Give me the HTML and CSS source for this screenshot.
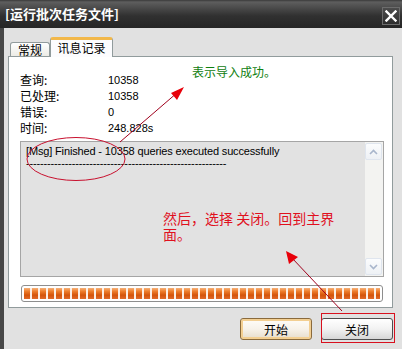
FILE: index.html
```html
<!DOCTYPE html>
<html>
<head>
<meta charset="utf-8">
<link rel="stylesheet" href="styles.css">
</head>
<body>
<div class="window">
  <div class="titlebar">
    <span class="title">[运行批次任务文件]</span>
    <span class="close"><svg width="12" height="12" viewBox="0 0 12 12"><path d="M1.5 1.5 L10.5 10.5 M10.5 1.5 L1.5 10.5" stroke="#fff" stroke-width="2.4" stroke-linecap="square"/></svg></span>
  </div>
  <div class="content">
    <div class="tabs">
      <div class="tab">常规</div>
      <div class="tab active">讯息记录</div>
    </div>
    <div class="panel">
      <div class="stats">
        <span class="label">查询:</span><span class="value">10358</span>
        <span class="label">已处理:</span><span class="value">10358</span>
        <span class="label">错误:</span><span class="value">0</span>
        <span class="label">时间:</span><span class="value">248.828s</span>
      </div>
      <div class="log">
        <div class="log-text">
          <div>[Msg] Finished - 10358 queries executed successfully</div>
          <div>---------------------------------------------------------</div>
        </div>
        <div class="scrollbar">
          <div class="sb-btn"><svg width="9" height="6" viewBox="0 0 9 6"><path d="M1 5 L4.5 1.5 L8 5" fill="none" stroke="#a9b6cc" stroke-width="1.6"/></svg></div>
          <div class="sb-track"></div>
          <div class="sb-btn"><svg width="9" height="6" viewBox="0 0 9 6"><path d="M1 1 L4.5 4.5 L8 1" fill="none" stroke="#a9b6cc" stroke-width="1.6"/></svg></div>
        </div>
      </div>
      <div class="progress"><div class="progress-fill"></div></div>
    </div>
    <div class="buttons">
      <button class="btn default">开始</button>
      <button class="btn">关闭</button>
    </div>
  </div>
  <div class="note-green">表示导入成功。</div>
  <div class="note-red"><div>然后，选择 关闭。回到主界</div><div>面。</div></div>
  <svg class="annot" width="402" height="349" viewBox="0 0 402 349">
    <ellipse cx="76" cy="159" rx="49" ry="21.5" fill="none" stroke="#c8102e" stroke-width="1"/>
    <line x1="120" y1="142" x2="178" y2="92" stroke="#a0001c" stroke-width="1"/>
    <polygon points="184,87 171,93 177,100" fill="#e8000a"/>
    <line x1="342" y1="311" x2="292" y2="258" stroke="#a0001c" stroke-width="1"/>
    <polygon points="286,251 289,264 298,257" fill="#e8000a"/>
  </svg>
  <div class="highlight"></div>
</div>
</body>
</html>
```

FILE: styles.css
```css
* { box-sizing: border-box; }
html, body { margin: 0; padding: 0; }
body {
  font-family: "Liberation Sans", "Noto Sans CJK SC", sans-serif;
  font-size: 11px;
  color: #000;
  background: #e1e1e1;
}
.window {
  position: relative;
  width: 402px;
  height: 349px;
  background: #e1e1e1;
  overflow: hidden;
}
.titlebar {
  height: 28px;
  display: flex;
  align-items: flex-start;
  justify-content: space-between;
  padding: 0 2px 0 5px;
  background: linear-gradient(#3a3a3a 0, #5e5e5e 2px, #4a4a4a 8px, #303030 16px, #262626 100%);
}
.title {
  color: #fff;
  font-weight: bold;
  font-size: 13px;
  line-height: 28px;
  font-family: "Noto Sans CJK SC", sans-serif;
}
.close {
  margin-top: 7px;
  width: 18px;
  height: 18px;
  border: 1px solid #6c6c6c;
  background: linear-gradient(#4c4c4c, #2e2e2e);
  display: flex;
  align-items: center;
  justify-content: center;
}
.content {
  height: 321px;
  border-left: 4px solid #474747;
  padding: 9px 9px 0 4px;
}
.tabs {
  display: flex;
  align-items: flex-end;
  height: 19px;
  margin-left: 2px;
  position: relative;
  z-index: 1;
}
.tab {
  height: 14px;
  width: 40px;
  border: 1px solid #919b9c;
  border-bottom: none;
  border-radius: 3px 3px 0 0;
  background: linear-gradient(#ffffff, #ecebe5);
  font-family: "Noto Sans CJK SC", sans-serif;
  font-size: 12px;
  line-height: 13px;
  text-align: center;
}
.tab.active {
  width: 63px;
  height: 20px;
  margin-bottom: -1px;
  background: #fcfcfe;
  border-top: 3px solid #f2b84a;
  line-height: 15px;
}
.panel {
  border: 1px solid #919b9c;
  background: #ffffff;
  padding: 15px 8px 5px 11px;
}
.stats {
  display: grid;
  grid-template-columns: 88px auto;
  line-height: 16px;
  height: 64px;
}
.label {
  font-family: "Noto Sans CJK SC", sans-serif;
  font-size: 12px;
}
.value {
  font-size: 11px;
}
.log {
  margin-top: 5px;
  height: 136px;
  border: 1px solid #a5a5a5;
  background: #e2e2e2;
  display: flex;
}
.log-text {
  flex: 1;
  padding: 3px 5px;
  line-height: 12px;
  letter-spacing: -0.15px;
}
.scrollbar {
  width: 18px;
  padding: 1px 0 1px 0;
  display: flex;
  flex-direction: column;
  background: #f3f3f1;
}
.sb-btn {
  width: 17px;
  height: 17px;
  border: 1px solid #dfe5ee;
  border-radius: 2px;
  background: linear-gradient(#fbfcfd, #eef1f5);
  display: flex;
  align-items: center;
  justify-content: center;
}
.sb-track { flex: 1; }
.progress {
  margin: 8px 1px 0 1px;
  height: 17px;
  border: 1px solid #8e8e8e;
  border-radius: 3px;
  background: #fff;
  padding: 2px 2px;
}
.progress-fill {
  height: 100%;
  background:
    repeating-linear-gradient(to right, transparent 0 6px, #fbeee4 6px 8px),
    linear-gradient(#f7b27a 0%, #ee7e2c 30%, #d4540a 65%, #e06a2a 100%);
}
.buttons {
  display: flex;
  justify-content: flex-end;
  gap: 9px;
  margin-top: 10px;
}
.btn {
  width: 72px;
  height: 22px;
  margin: 0;
  padding: 0;
  border: 1px solid #4e4e4e;
  border-radius: 3px;
  background: linear-gradient(#ffffff, #f2f2f2 50%, #d6d6d6);
  font-family: "Noto Sans CJK SC", sans-serif;
  font-size: 12px;
  color: #000;
}
.btn.default {
  border-color: #8a6a3c;
  box-shadow: inset 0 0 0 2px #f3cf92;
  background: linear-gradient(#fffdf8, #f7f2ea 50%, #e6dccb);
}
.note-green {
  position: absolute;
  left: 192px;
  top: 64px;
  font-family: "Noto Sans CJK SC", sans-serif;
  font-size: 12px;
  line-height: 16px;
  color: #108010;
}
.note-red {
  position: absolute;
  left: 163px;
  top: 210px;
  font-family: "Noto Sans CJK SC", sans-serif;
  font-size: 14px;
  line-height: 16px;
  color: #e0101e;
}
.annot {
  position: absolute;
  left: 0;
  top: 0;
  pointer-events: none;
}
.highlight {
  position: absolute;
  left: 321px;
  top: 313px;
  width: 74px;
  height: 30px;
  border: 1px solid #d8101e;
}
```
